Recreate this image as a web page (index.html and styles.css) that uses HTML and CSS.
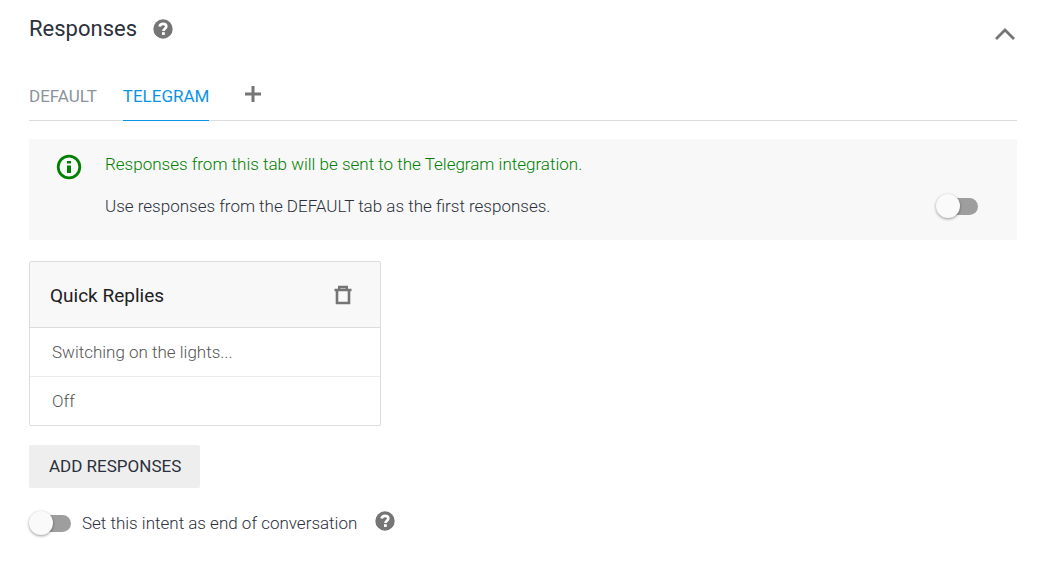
FILE: index.html
```html
<!DOCTYPE html>
<html lang="en">
<head>
<meta charset="utf-8">
<meta name="viewport" content="width=device-width, initial-scale=1">
<title>Responses</title>
<link rel="stylesheet" href="styles.css">
</head>
<body>
<svg class="sprite" aria-hidden="true">
  <symbol id="help" viewBox="0 0 20 20">
    <circle cx="10" cy="10" r="9.7" fill="currentColor"/>
    <path d="M6.6 7.5C7.1 5.6 8.4 4.9 10 4.9c2 0 3.3 1 3.3 2.6 0 2.3-2.9 2.2-2.9 4.6" fill="none" stroke="#fff" stroke-width="2.7"/>
    <path d="M9 13.2h2.8v2.7H9z" fill="#fff"/>
  </symbol>
</svg>
<main class="panel">
  <header class="panel-head">
    <h1 class="title">Responses</h1>
    <button class="icon-btn" type="button" aria-label="Help"><svg class="help-icon"><use href="#help"/></svg></button>
    <button class="icon-btn collapse" type="button" aria-label="Collapse">
      <svg width="22" height="14" viewBox="0 0 22 14"><path d="M2 12 11 3l9 9" fill="none" stroke="currentColor" stroke-width="2.8"/></svg>
    </button>
  </header>

  <nav class="tabs">
    <a class="tab" href="#default">DEFAULT</a>
    <a class="tab tab-active" href="#telegram" aria-current="page">TELEGRAM</a>
    <button class="icon-btn add-tab" type="button" aria-label="Add tab">
      <svg width="16" height="16" viewBox="0 0 16 16"><path d="M8 0v16M0 8h16" stroke="currentColor" stroke-width="3"/></svg>
    </button>
  </nav>

  <section class="notice">
    <svg class="info-icon" viewBox="0 0 26 26" aria-hidden="true">
      <circle cx="13" cy="13" r="10.8" fill="none" stroke="currentColor" stroke-width="2.8"/>
      <path d="M11 7h4v2.6h-4zM11 11.5h4V19h-4z" fill="currentColor"/>
    </svg>
    <div class="notice-body">
      <p class="notice-text">Responses from this tab will be sent to the Telegram integration.</p>
      <div class="notice-option">
        <label for="use-default">Use responses from the DEFAULT tab as the first responses.</label>
        <input class="switch" id="use-default" type="checkbox">
      </div>
    </div>
  </section>

  <section class="card">
    <div class="card-head">
      <h2 class="card-title">Quick Replies</h2>
      <button class="icon-btn" type="button" aria-label="Delete">
        <svg width="18" height="20" viewBox="0 0 18 20"><path d="M3 5v13h12V5" fill="none" stroke="currentColor" stroke-width="2.6"/><path d="M.5 5h17M5.2 4.5V2h7.6v2.5" fill="none" stroke="currentColor" stroke-width="2.4"/></svg>
      </button>
    </div>
    <input class="reply" type="text" aria-label="Prompt" value="Switching on the lights...">
    <input class="reply" type="text" aria-label="Reply" value="Off">
  </section>

  <button class="add-btn" type="button">ADD RESPONSES</button>

  <div class="end-option">
    <input class="switch" id="end" type="checkbox">
    <label for="end">Set this intent as end of conversation</label>
    <button class="icon-btn end-help" type="button" aria-label="Help"><svg class="help-icon"><use href="#help"/></svg></button>
  </div>
</main>
</body>
</html>
```
FILE: styles.css
```css
* { box-sizing: border-box; }

body {
  margin: 0;
  background: #fff;
  color: #2b303b;
  font: 300 17px/24px Roboto, "Liberation Sans", sans-serif;
}

h1, h2, p { margin: 0; }

.sprite { position: absolute; width: 0; height: 0; }

.panel { padding: 13px 22px 28px 29px; }

.icon-btn {
  display: flex;
  padding: 0;
  border: 0;
  background: none;
  color: #757575;
  cursor: pointer;
}

.help-icon { width: 20px; height: 20px; }

.panel-head {
  display: flex;
  align-items: center;
  height: 32px;
  gap: 16px;
}

.title { font-size: 22px; font-weight: 400; line-height: 32px; }

.collapse { margin: 10px 1px 0 auto; }

.tabs {
  display: flex;
  gap: 26px;
  margin-top: 27px;
  border-bottom: 1px solid #dcdcdc;
}

.tab {
  height: 48px;
  padding-top: 12px;
  margin-bottom: -1px;
  color: #8b939c;
  font-weight: 400;
  text-decoration: none;
}

.tab-active { color: #0b94e6; border-bottom: 1px solid #0b94e6; height: 49px; }

.add-tab { align-items: center; margin: 0 10px 4px; }

.notice {
  display: flex;
  gap: 23px;
  margin-top: 18px;
  padding: 13px 39px 22px 27px;
  background: #f8f8f8;
}

.info-icon { flex: none; width: 26px; height: 26px; margin-top: 2px; color: #008000; }

.notice-body { flex: 1; }
.notice-text { color: #008000; }

.notice-option {
  display: flex;
  align-items: center;
  justify-content: space-between;
  margin-top: 18px;
}

.switch {
  appearance: none;
  display: flex;
  align-items: center;
  flex: none;
  width: 42px;
  height: 24px;
  margin: 0;
  cursor: pointer;
  position: relative;
}

.switch::before {
  content: "";
  width: 38px;
  height: 17px;
  margin-left: 4px;
  border-radius: 9px;
  background: #9e9e9e;
}

.switch::after {
  content: "";
  position: absolute;
  top: 0;
  left: 0;
  width: 24px;
  height: 24px;
  border-radius: 50%;
  background: #fafafa;
  box-shadow: 0 1px 3px rgba(0, 0, 0, .4);
}

.switch:checked::after { left: auto; right: 0; }

.card {
  max-width: 352px;
  margin-top: 21px;
  border: 1px solid #dcdcdc;
  border-radius: 2px;
}

.card-head {
  display: flex;
  align-items: center;
  justify-content: space-between;
  height: 66px;
  padding: 0 28px 0 20px;
  border-bottom: 1px solid #dcdcdc;
  background: #f8f8f8;
}

.card-title { padding-top: 2px; color: #212121; font-size: 19px; font-weight: 400; }

.reply {
  display: block;
  width: 100%;
  height: 49px;
  padding: 0 22px;
  border: 0;
  border-bottom: 1px solid #ececec;
  background: none;
  color: #555;
  font: inherit;
}

.reply:last-child { height: 48px; border-bottom: 0; }

.add-btn {
  display: block;
  height: 43px;
  margin-top: 19px;
  padding: 0 19px 1px 20px;
  border: 0;
  border-radius: 2px;
  background: #eee;
  color: #2b303b;
  font: 400 17px/24px Roboto, "Liberation Sans", sans-serif;
}

.end-option {
  display: flex;
  align-items: center;
  gap: 11px;
  margin-top: 23px;
}

.end-help { margin: 0 0 4px 7px; }
```
